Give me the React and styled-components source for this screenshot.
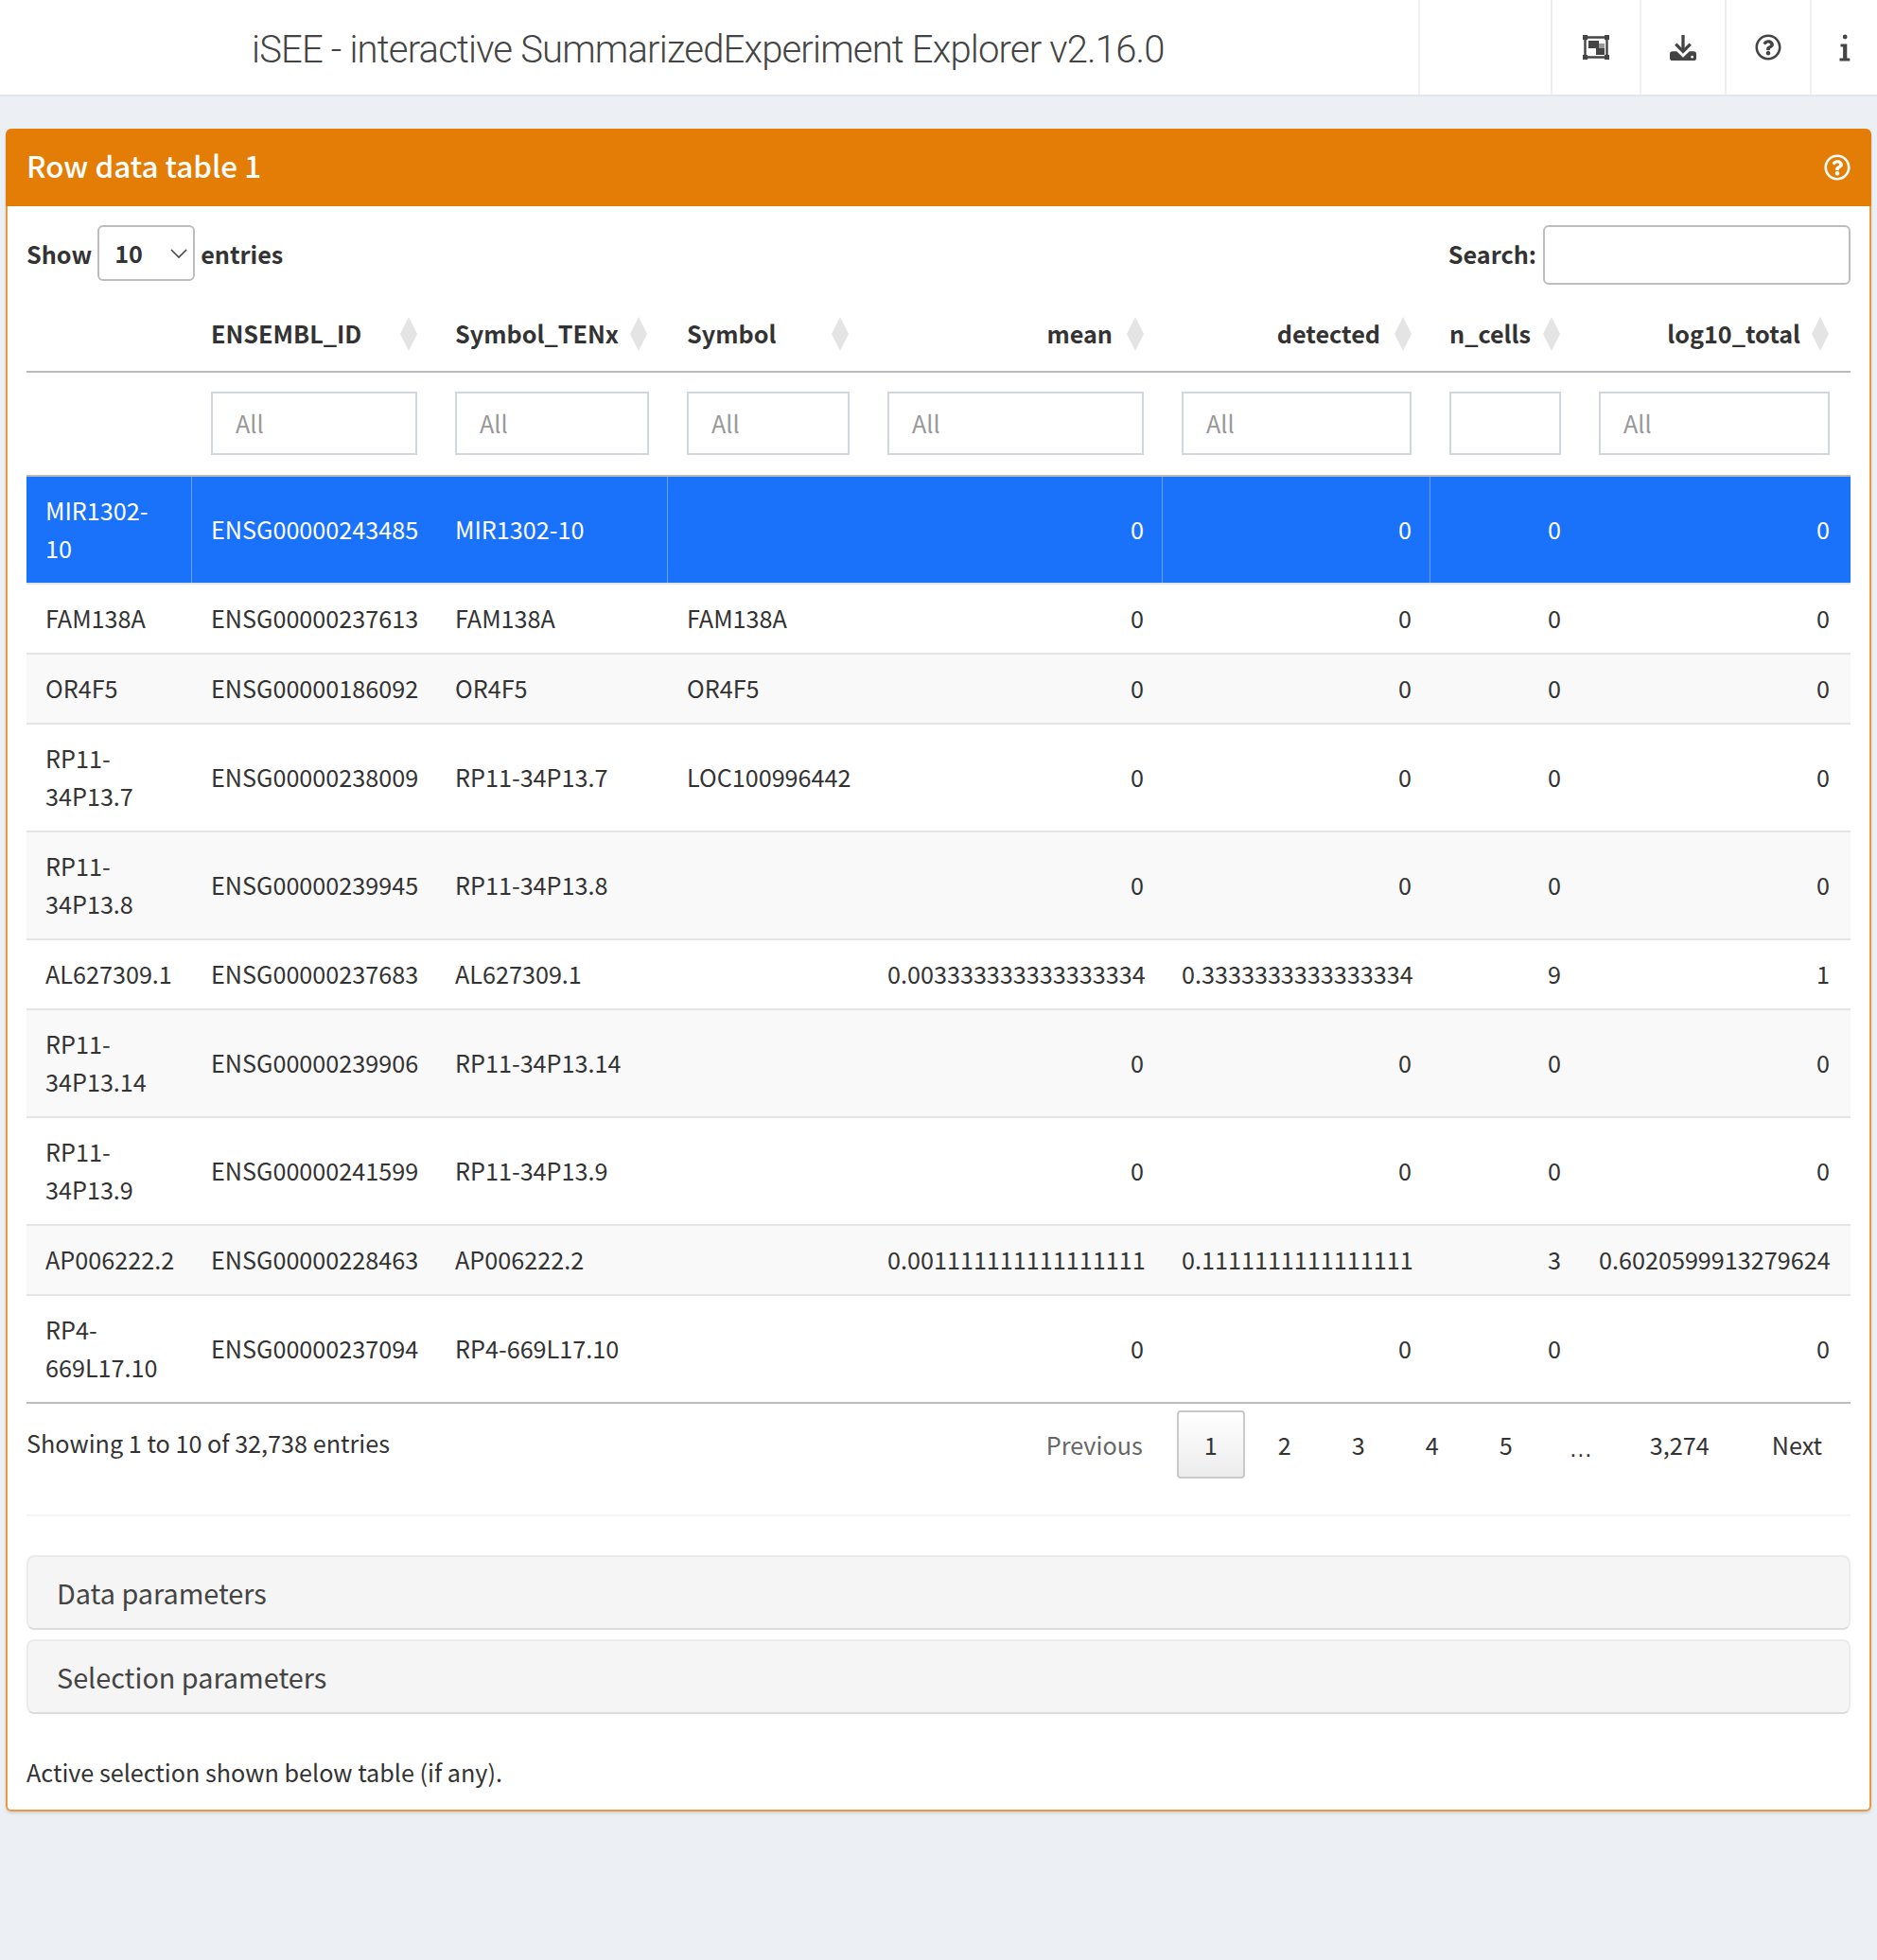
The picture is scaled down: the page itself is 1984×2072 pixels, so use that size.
import React from 'react';
import styled, { createGlobalStyle } from 'styled-components';
import { FaRegQuestionCircle } from 'react-icons/fa';

const GlobalStyle = createGlobalStyle`
  html, body {
    margin: 0;
    padding: 0;
    background: #ecf0f5;
    font-family: "Noto Sans CJK SC", "Open Sans", sans-serif;
    font-size: 25.2px;
    line-height: 40px;
    color: #333;
  }
  * { box-sizing: border-box; }
`;

const Page = styled.div`
  min-height: 2072px;
  width: 1984px;
`;

const Header = styled.header`
  display: flex;
  align-items: stretch;
  height: 102px;
  background: #fff;
  border-bottom: 2px solid #e3e6ea;
`;

const Title = styled.div`
  flex: 1;
  padding-left: 266px;
  font-family: Roboto, "Liberation Sans", sans-serif;
  font-weight: 300;
  font-size: 40px;
  letter-spacing: -0.82px;
  line-height: 106px;
  color: #444;
`;

const NavCell = styled.div`
  width: ${({ $w }) => $w}px;
  display: flex;
  align-items: center;
  justify-content: center;
  border-left: 2px solid #eef0f2;
  color: #444;
  font-size: 28px;
`;

const NavIcon = styled.svg`
  display: block;
  height: ${({ $h }) => $h || 29}px;
  fill: currentColor;
`;

const Content = styled.main`
  padding: 34px 6px 0;
`;

const Box = styled.section`
  border-radius: 6px;
  box-shadow: 0 2px 3px rgba(0, 0, 0, 0.12);
`;

const BoxHeader = styled.div`
  height: 82px;
  padding: 0 22px;
  display: flex;
  align-items: center;
  justify-content: space-between;
  background: #e37d05;
  border-radius: 6px 6px 0 0;
  color: #fff;
  font-size: 28px;
`;

const BoxTitle = styled.h3`
  margin: 0 0 4px;
  font-size: 31.4px;
  font-weight: 500;
  line-height: 40px;
`;

const BoxBody = styled.div`
  padding: 20px 20px 20px;
  background: #fff;
  border: 2px solid #e89a42;
  border-top: 0;
  border-radius: 0 0 6px 6px;
`;

const Toolbar = styled.div`
  height: 63px;
  display: flex;
  justify-content: space-between;
`;

const ToolLabel = styled.label`
  display: flex;
  align-items: flex-start;
  gap: ${({ $gap }) => $gap}px;
  font-weight: 700;
  line-height: 60px;
`;

const SelectBox = styled.div`
  width: 103px;
  height: 59px;
  padding-left: 16px;
  display: flex;
  align-items: center;
  justify-content: space-between;
  border: 2px solid #bdbdbd;
  border-radius: 6px;
  line-height: 55px;
`;

const Chevron = styled.svg`
  width: 18px;
  height: 10px;
  margin-right: 6px;
  fill: none;
  stroke: #444;
  stroke-width: 1.6;
`;

const SearchInput = styled.input`
  width: 325px;
  height: 63px;
  border: 2px solid #bdbdbd;
  border-radius: 6px;
  outline: none;
  background: #fff;
`;

const Table = styled.table`
  width: 1928px;
  margin-top: 12px;
  table-layout: fixed;
  border-collapse: separate;
  border-spacing: 0;
`;

const Th = styled.th`
  position: relative;
  height: 81px;
  padding: 0 ${({ $right }) => ($right ? '53px' : '20px')} 2px 20px;
  text-align: ${({ $right }) => ($right ? 'right' : 'left')};
  font-weight: 700;
  white-space: nowrap;
  border-bottom: 2px solid #bbb;
`;

const SortMark = styled.span`
  position: absolute;
  right: ${({ $offset }) => $offset}px;
  top: 22px;
  width: 18px;
  height: 36px;
  background: #e4e4e4;
  clip-path: polygon(50% 0, 100% 50%, 50% 100%, 0 50%);
`;

const FilterCell = styled.td`
  padding: 20px ${({ $pr }) => $pr}px 21px 20px;
  border-bottom: 2px solid #bbb;
`;

const FilterInput = styled.input`
  display: block;
  width: 100%;
  height: 67px;
  padding: 0 24px 2px;
  border: 2px solid #d2d6de;
  outline: none;
  font: inherit;
  color: #555;
  background: #fff;
  &::placeholder {
    color: #999;
    opacity: 1;
  }
`;

const Tr = styled.tr`
  background: ${({ $selected, $striped }) =>
    $selected ? '#1a72fb' : $striped ? '#f9f9f9' : '#fff'};
  color: ${({ $selected }) => ($selected ? '#fff' : '#333')};
`;

const Td = styled.td`
  padding: 15px ${({ $pr }) => $pr}px 17px 20px;
  text-align: ${({ $right }) => ($right ? 'right' : 'left')};
  white-space: ${({ $wrap }) => ($wrap ? 'pre-line' : 'nowrap')};
  border-bottom: 2px solid ${({ $last }) => ($last ? '#bbb' : '#e4e4e4')};
  box-shadow: ${({ $line }) => ($line ? 'inset -1px 0 0 rgba(255, 255, 255, 0.35)' : 'none')};
`;

const TableFooter = styled.div`
  height: 119px;
  display: flex;
  justify-content: space-between;
  align-items: flex-start;
  border-bottom: 2px solid #f4f4f4;
`;

const Info = styled.div`
  padding-top: 21px;
`;

const Pager = styled.nav`
  display: flex;
  gap: 6px;
  padding-top: 7px;
`;

const PageButton = styled.span`
  height: 72px;
  padding: 0 28px;
  display: flex;
  align-items: center;
  justify-content: center;
  border: 2px solid transparent;
  border-radius: 4px;
  color: ${({ $muted }) => ($muted ? '#666' : '#333')};
`;

const NumberButton = styled(PageButton)`
  width: 72px;
  padding: 0;
  border-color: ${({ $current }) => ($current ? '#c9c9c9' : 'transparent')};
  background: ${({ $current }) =>
    $current ? 'linear-gradient(to bottom, #fff 0%, #ececec 100%)' : 'transparent'};
`;

const Dots = styled(PageButton)`
  width: 74px;
  padding: 8px 0 0;
  font-family: "Liberation Sans", sans-serif;
`;

const Panels = styled.div`
  display: flex;
  flex-direction: column;
  gap: 10px;
  margin-top: 41px;
`;

const Panel = styled.div`
  height: 79px;
  padding: 0 30px;
  display: flex;
  align-items: center;
  background: #f5f5f5;
  border: 2px solid #ebebeb;
  border-bottom-color: #dcdcdc;
  border-radius: 8px;
  font-size: 28.8px;
  color: #444;
`;

const Note = styled.p`
  margin: 41px 0 0;
`;

const columns = [
  { width: 175 },
  { width: 258, label: 'ENSEMBL_ID', offset: 20, placeholder: 'All' },
  { width: 245, label: 'Symbol_TENx', offset: 22, placeholder: 'All' },
  { width: 212, label: 'Symbol', offset: 21, placeholder: 'All' },
  { width: 311, label: 'mean', offset: 20, right: true, placeholder: 'All' },
  { width: 283, label: 'detected', offset: 20, right: true, placeholder: 'All' },
  { width: 158, label: 'n_cells', offset: 21, right: true, placeholder: '' },
  { width: 286, label: 'log10_total', offset: 23, right: true, placeholder: 'All', pr: 22 },
];

const rows = [
  ['MIR1302-\n10', 'ENSG00000243485', 'MIR1302-10', '', '0', '0', '0', '0'],
  ['FAM138A', 'ENSG00000237613', 'FAM138A', 'FAM138A', '0', '0', '0', '0'],
  ['OR4F5', 'ENSG00000186092', 'OR4F5', 'OR4F5', '0', '0', '0', '0'],
  ['RP11-\n34P13.7', 'ENSG00000238009', 'RP11-34P13.7', 'LOC100996442', '0', '0', '0', '0'],
  ['RP11-\n34P13.8', 'ENSG00000239945', 'RP11-34P13.8', '', '0', '0', '0', '0'],
  ['AL627309.1', 'ENSG00000237683', 'AL627309.1', '', '0.003333333333333334', '0.3333333333333334', '9', '1'],
  ['RP11-\n34P13.14', 'ENSG00000239906', 'RP11-34P13.14', '', '0', '0', '0', '0'],
  ['RP11-\n34P13.9', 'ENSG00000241599', 'RP11-34P13.9', '', '0', '0', '0', '0'],
  ['AP006222.2', 'ENSG00000228463', 'AP006222.2', '', '0.001111111111111111', '0.1111111111111111', '3', '0.6020599913279624'],
  ['RP4-\n669L17.10', 'ENSG00000237094', 'RP4-669L17.10', '', '0', '0', '0', '0'],
];

// the selected row only shows a divider after these columns
const dividers = [0, 2, 4, 5];

const pages = ['1', '2', '3', '4', '5'];

const GroupIcon = () => (
  <NavIcon viewBox="0 0 28 26" width="28" $h={26}>
    <path d="M2.500 2.500h23v21h-23z" fill="none" stroke="currentColor" strokeWidth="2.400" />
    <path d="M0 0h5v5H0zM23 0h5v5h-5zM0 21h5v5H0zM23 21h5v5h-5z" />
    <path d="M6 6h11v8H6zM14 14h9v7h-9z" />
    <path d="M17 9h6v5h-6z" opacity="0.55" />
  </NavIcon>
);

const DownloadIcon = () => (
  <NavIcon viewBox="0 0 30 30" width="30">
    <path d="M13.300 1h3.400v17h-3.400z" />
    <path d="M7 11l8 8 8-8" fill="none" stroke="currentColor" strokeWidth="3.400" />
    <path d="M3.500 19H8l7 6.500 7-6.500h4.500a3 3 0 0 1 3 3v4a3 3 0 0 1-3 3H3.500a3 3 0 0 1-3-3v-4a3 3 0 0 1 3-3z" />
    <circle cx="25" cy="25" r="1.400" fill="#fff" />
  </NavIcon>
);

const InfoIcon = () => (
  <NavIcon viewBox="0 0 12 29" width="12">
    <circle cx="6.200" cy="3" r="2.400" />
    <path d="M1.500 10.500h6.800v15h3v3H.5v-3h3.600V13.500H1.500z" />
  </NavIcon>
);

const App = () => (
  <Page>
    <GlobalStyle />
    <Header>
      <Title>iSEE - interactive SummarizedExperiment Explorer v2.16.0</Title>
      <NavCell $w={140} />
      <NavCell $w={94}><GroupIcon /></NavCell>
      <NavCell $w={90}><DownloadIcon /></NavCell>
      <NavCell $w={90}><FaRegQuestionCircle /></NavCell>
      <NavCell $w={71}><InfoIcon /></NavCell>
    </Header>
    <Content>
      <Box>
        <BoxHeader>
          <BoxTitle>Row data table 1</BoxTitle>
          <FaRegQuestionCircle />
        </BoxHeader>
        <BoxBody>
          <Toolbar>
            <ToolLabel $gap={6}>
              Show
              <SelectBox>
                10
                <Chevron viewBox="0 0 18 10"><path d="M1 1l8 8 8-8" /></Chevron>
              </SelectBox>
              entries
            </ToolLabel>
            <ToolLabel $gap={7}>
              Search:
              <SearchInput type="search" />
            </ToolLabel>
          </Toolbar>
          <Table>
            <colgroup>
              {columns.map((c, i) => <col key={i} width={c.width} />)}
            </colgroup>
            <thead>
              <tr>
                {columns.map((c, i) => (
                  <Th key={i} $right={c.right}>
                    {c.label}
                    {c.label && <SortMark $offset={c.offset} />}
                  </Th>
                ))}
              </tr>
              <tr>
                {columns.map((c, i) => (
                  <FilterCell key={i} $pr={c.pr || 20}>
                    {c.label && <FilterInput placeholder={c.placeholder} />}
                  </FilterCell>
                ))}
              </tr>
            </thead>
            <tbody>
              {rows.map((row, r) => (
                <Tr key={r} $selected={r === 0} $striped={r % 2 === 0}>
                  {row.map((cell, i) => (
                    <Td
                      key={i}
                      $right={columns[i].right}
                      $wrap={i === 0}
                      $pr={columns[i].pr || (i === 0 ? 16 : 20)}
                      $last={r === rows.length - 1}
                      $line={r === 0 && dividers.includes(i)}
                    >
                      {cell}
                    </Td>
                  ))}
                </Tr>
              ))}
            </tbody>
          </Table>
          <TableFooter>
            <Info>Showing 1 to 10 of 32,738 entries</Info>
            <Pager>
              <PageButton $muted>Previous</PageButton>
              {pages.map((p, i) => (
                <NumberButton key={p} $current={i === 0}>{p}</NumberButton>
              ))}
              <Dots>…</Dots>
              <PageButton>3,274</PageButton>
              <PageButton>Next</PageButton>
            </Pager>
          </TableFooter>
          <Panels>
            <Panel>Data parameters</Panel>
            <Panel>Selection parameters</Panel>
          </Panels>
          <Note>Active selection shown below table (if any).</Note>
        </BoxBody>
      </Box>
    </Content>
  </Page>
);

export default App;
